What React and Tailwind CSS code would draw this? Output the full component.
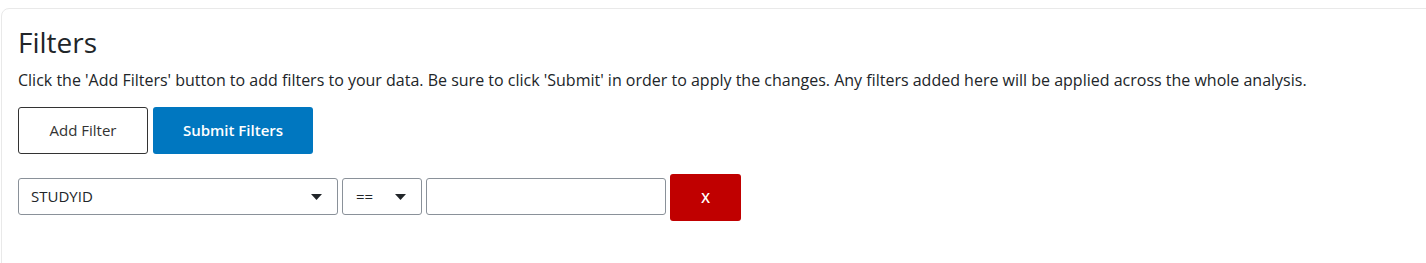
import { useState } from 'react';

function Caret() {
  return (
    <svg width="11" height="6" viewBox="0 0 11 6" className="shrink-0">
      <path d="M0 0 L11 0 L5.5 6 Z" fill="#212529" />
    </svg>
  );
}

export default function App() {
  const [value, setValue] = useState('');

  return (
    <div className="w-[1426px] h-[263px] bg-white pt-2 pl-px overflow-hidden font-['Open_Sans',sans-serif] text-[#212529]">
      {/* Filters card, runs past the right edge */}
      <div className="w-[1440px] h-[280px] border border-[#e9e9e9] rounded-lg px-4 pt-[15px]">
        <h2 className="text-[28px] leading-[36px] font-normal">Filters</h2>
        <p className="text-[16px] leading-[24px] mt-[8px]">
          Click the 'Add Filters' button to add filters to your data. Be sure to click 'Submit' in order to apply the changes. Any filters added here will be applied across the whole analysis.
        </p>

        <div className="flex gap-[5px] mt-[15px]">
          <button className="w-[130px] h-[47px] border border-[#333] rounded-[3px] bg-white text-[15px] text-[#333]">
            Add Filter
          </button>
          <button className="w-[160px] h-[47px] rounded-[3px] bg-[#0077c0] text-[15px] font-semibold text-white">
            Submit Filters
          </button>
        </div>

        {/* Filter row */}
        <div className="flex items-start gap-[4px] mt-[20px]">
          <div className="w-[320px] h-[37px] mt-[4px] border border-[#8a9199] rounded-[3px] flex items-center justify-between pl-3 pr-[15px] text-[15px]">
            <span>STUDYID</span>
            <Caret />
          </div>
          <div className="w-[80px] h-[37px] mt-[4px] border border-[#8a9199] rounded-[3px] flex items-center justify-between pl-[13px] pr-[15px] text-[15px]">
            <span>==</span>
            <Caret />
          </div>
          <input
            value={value}
            onChange={e => setValue(e.target.value)}
            className="w-[240px] h-[37px] mt-[4px] border border-[#8a9199] rounded-[3px] px-2 text-[15px] outline-none"
          />
          <button className="w-[71px] h-[47px] rounded-[3px] bg-[#c00000] text-white text-[14px] font-semibold">
            X
          </button>
        </div>
      </div>
    </div>
  );
}
